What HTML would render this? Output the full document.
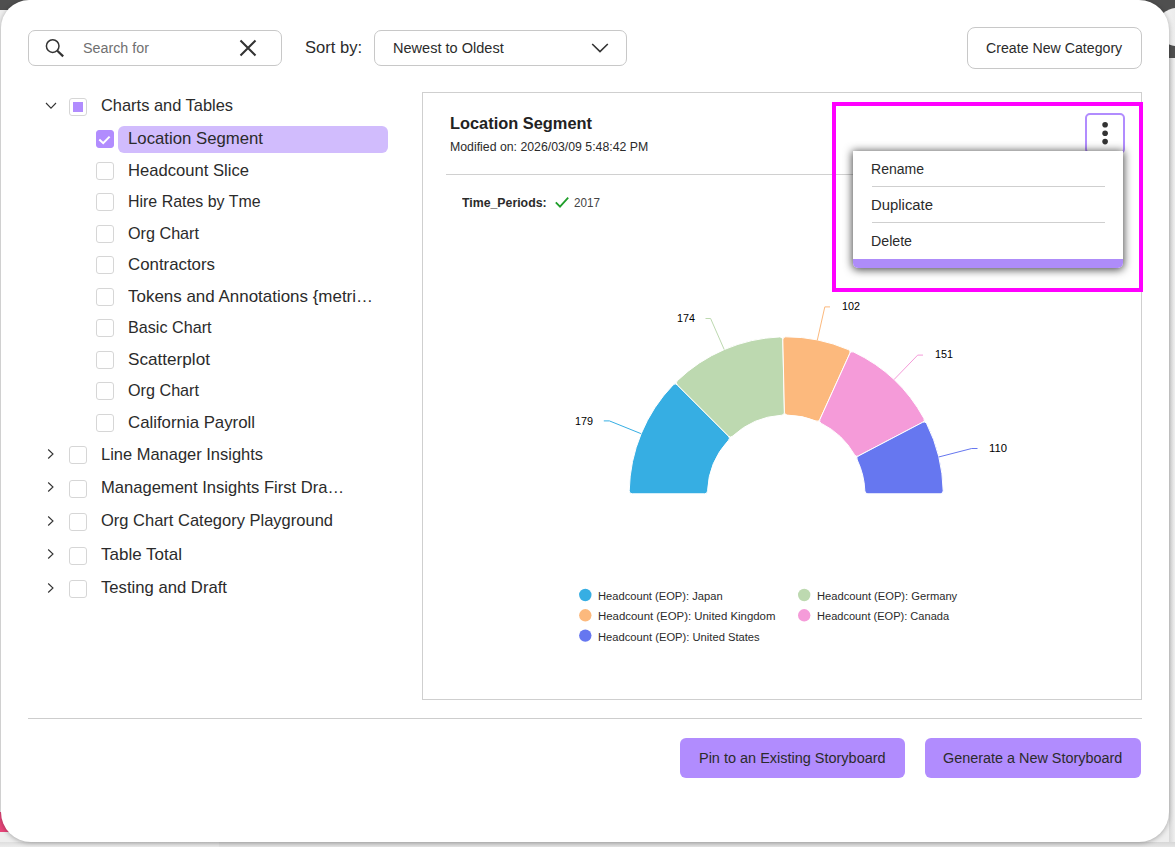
<!DOCTYPE html>
<html><head><meta charset="utf-8">
<style>
html,body{margin:0;padding:0;}
body{width:1175px;height:847px;overflow:hidden;position:relative;background:#eeeeee;font-family:"Liberation Sans",sans-serif;}
.abs{position:absolute;}
.t{position:absolute;white-space:nowrap;line-height:1;transform-origin:0 0;}
.cb{position:absolute;width:15.6px;height:16px;border:1px solid #d6d6d6;border-radius:3px;background:#fff;box-sizing:content-box}
.cb.on{background:#b18cfe;border-color:#b18cfe}
</style></head><body>
<div class="abs" style="left:0;top:0;width:1175px;height:9.5px;background:#4f4f4f"></div>
<div class="abs" style="left:1140px;top:0;width:35px;height:58px;background:#4f4f4f"></div>
<div class="abs" style="left:1157px;top:8px;width:40px;height:38px;border-radius:50%;background:linear-gradient(90deg,#f8f8f8,#dedede)"></div>
<div class="abs" style="left:1169px;top:58px;width:6px;height:784px;background:linear-gradient(90deg,#d8d8d8,#efefef)"></div>
<div class="abs" style="left:219px;top:842px;width:956px;height:5px;background:linear-gradient(180deg,#d6d6d6,#e6e6e6)"></div><div class="abs" style="left:0;top:842px;width:219px;height:5px;background:linear-gradient(180deg,#dedede,#ececec)"></div>
<div class="abs" style="left:0;top:812px;width:9px;height:19.5px;background:#e8467a"></div>
<div class="abs" style="left:0.7px;top:0;width:1168.5px;height:842px;background:#fff;border-radius:28px 30px 30px 30px;box-shadow:0 1px 5px rgba(0,0,0,0.3)"></div>
<!-- search -->
<div class="abs" style="left:28px;top:30px;width:252px;height:34px;border:1px solid #c8c8c8;border-radius:7px"></div>
<svg class="abs" style="left:44px;top:38px" width="22" height="22" viewBox="0 0 22 22"><circle cx="8.7" cy="8.1" r="6.3" fill="none" stroke="#333" stroke-width="1.5"/><path d="M13.3 12.7 L19.2 18.4" stroke="#333" stroke-width="2.2"/></svg>
<svg class="abs" style="left:238px;top:38px" width="20" height="20" viewBox="0 0 20 20"><path d="M2.5 2.5 L17.5 17.5 M17.5 2.5 L2.5 17.5" stroke="#333" stroke-width="2.1"/></svg>
<!-- sort -->
<div class="abs" style="left:374px;top:30px;width:250.5px;height:34px;border:1px solid #c8c8c8;border-radius:7px"></div>
<svg class="abs" style="left:590px;top:41px" width="20" height="14" viewBox="0 0 20 14"><path d="M2.2 3 L10 10.6 L17.8 3" fill="none" stroke="#333" stroke-width="1.6"/></svg>
<div class="abs" style="left:967px;top:27.3px;width:173px;height:40.2px;border:1px solid #c8c8c8;border-radius:8px"></div>
<!-- highlight -->
<div class="abs" style="left:118px;top:125.8px;width:270px;height:26.8px;background:#d1bcfd;border-radius:6px"></div>
<div class="cb" style="left:69.3px;top:98px"><div style="position:absolute;left:3px;top:3px;width:10.2px;height:10.2px;background:#b18cfe"></div></div><div class="cb on" style="left:96.2px;top:130.00px"><svg width="18" height="18" viewBox="0 0 18 18" style="position:absolute;left:-1px;top:-1px"><path d="M3.3 9.6 L7.2 13.2 L13.6 6.6" fill="none" stroke="#fff" stroke-width="2"/></svg></div><div class="cb" style="left:96.2px;top:161.56px"></div><div class="cb" style="left:96.2px;top:193.12px"></div><div class="cb" style="left:96.2px;top:224.68px"></div><div class="cb" style="left:96.2px;top:256.24px"></div><div class="cb" style="left:96.2px;top:287.80px"></div><div class="cb" style="left:96.2px;top:319.36px"></div><div class="cb" style="left:96.2px;top:350.92px"></div><div class="cb" style="left:96.2px;top:382.48px"></div><div class="cb" style="left:96.2px;top:414.04px"></div><div class="cb" style="left:69.3px;top:446.10px"></div><div class="cb" style="left:69.3px;top:479.60px"></div><div class="cb" style="left:69.3px;top:513.10px"></div><div class="cb" style="left:69.3px;top:546.60px"></div><div class="cb" style="left:69.3px;top:580.10px"></div>
<svg class="abs" style="left:44px;top:99.5px" width="14" height="12" viewBox="0 0 14 12"><path d="M2 3 L7 8.2 L12 3" fill="none" stroke="#333" stroke-width="1.1"/></svg><svg class="abs" style="left:45px;top:447.60px" width="12" height="12" viewBox="0 0 12 12"><path d="M3.2 1.5 L8 6 L3.2 10.5" fill="none" stroke="#333" stroke-width="1.1"/></svg><svg class="abs" style="left:45px;top:481.10px" width="12" height="12" viewBox="0 0 12 12"><path d="M3.2 1.5 L8 6 L3.2 10.5" fill="none" stroke="#333" stroke-width="1.1"/></svg><svg class="abs" style="left:45px;top:514.60px" width="12" height="12" viewBox="0 0 12 12"><path d="M3.2 1.5 L8 6 L3.2 10.5" fill="none" stroke="#333" stroke-width="1.1"/></svg><svg class="abs" style="left:45px;top:548.10px" width="12" height="12" viewBox="0 0 12 12"><path d="M3.2 1.5 L8 6 L3.2 10.5" fill="none" stroke="#333" stroke-width="1.1"/></svg><svg class="abs" style="left:45px;top:581.60px" width="12" height="12" viewBox="0 0 12 12"><path d="M3.2 1.5 L8 6 L3.2 10.5" fill="none" stroke="#333" stroke-width="1.1"/></svg>
<!-- panel -->
<div class="abs" style="left:422px;top:92px;width:718px;height:606px;border:1px solid #cfcfcf"></div>
<div class="abs" style="left:446px;top:174px;width:672px;height:1px;background:#d0d0d0"></div>
<svg class="abs" style="left:554px;top:195px" width="16" height="14" viewBox="0 0 16 14"><path d="M1.8 7.3 L6 11.6 L14.2 2.6" fill="none" stroke="#1f9e2a" stroke-width="1.8"/></svg>
<svg class="abs" style="left:0;top:0" width="1175" height="847" viewBox="0 0 1175 847"><path d="M632.20,493.80 Q629.20,493.80 629.23,490.80 A157.0,157.0 0 0 1 673.08,384.93 Q675.18,382.78 677.31,384.91 L728.43,436.03 Q730.55,438.15 728.47,440.31 A78.7,78.7 0 0 0 707.56,490.80 Q707.50,493.80 704.50,493.80 Z" fill="#36aee3" stroke="#fff" stroke-width="1" stroke-linejoin="round"/><path d="M677.31,384.91 Q675.18,382.78 677.33,380.68 A157.0,157.0 0 0 1 779.76,336.93 Q782.76,336.84 782.82,339.84 L784.41,412.12 Q784.47,415.12 781.48,415.24 A78.7,78.7 0 0 0 732.71,436.07 Q730.55,438.15 728.43,436.03 Z" fill="#bdd9b0" stroke="#fff" stroke-width="1" stroke-linejoin="round"/><path d="M782.82,339.84 Q782.76,336.84 785.76,336.80 A157.0,157.0 0 0 1 848.28,349.59 Q851.02,350.81 849.78,353.54 L819.93,419.39 Q818.69,422.12 815.94,420.93 A78.7,78.7 0 0 0 787.47,415.11 Q784.47,415.12 784.41,412.12 Z" fill="#fcb97d" stroke="#fff" stroke-width="1" stroke-linejoin="round"/><path d="M849.78,353.54 Q851.02,350.81 853.74,352.07 A157.0,157.0 0 0 1 923.85,418.29 Q925.27,420.93 922.61,422.32 L858.57,455.88 Q855.91,457.27 854.47,454.64 A78.7,78.7 0 0 0 821.40,423.41 Q818.69,422.12 819.93,419.39 Z" fill="#f59bd9" stroke="#fff" stroke-width="1" stroke-linejoin="round"/><path d="M922.61,422.32 Q925.27,420.93 926.63,423.60 A157.0,157.0 0 0 1 943.17,490.80 Q943.20,493.80 940.20,493.80 L867.90,493.80 Q864.90,493.80 864.84,490.80 A78.7,78.7 0 0 0 857.25,459.96 Q855.91,457.27 858.57,455.88 Z" fill="#6677f0" stroke="#fff" stroke-width="1" stroke-linejoin="round"/><path d="M603.8,420.9 L609.4,420.9 L640.9,433.6" fill="none" stroke="#36aee3" stroke-width="1"/><path d="M705.5,318.5 L710.6,318.5 L724.2,349.5" fill="none" stroke="#bdd9b0" stroke-width="1"/><path d="M830,306.9 L824.8,306.9 L817.3,340.2" fill="none" stroke="#fcb97d" stroke-width="1"/><path d="M923,355.1 L917.7,355.1 L894,379.6" fill="none" stroke="#f59bd9" stroke-width="1"/><path d="M977.5,448.5 L971.7,448.5 L938.7,457" fill="none" stroke="#6677f0" stroke-width="1"/><circle cx="585.3" cy="595.0" r="6.2" fill="#36aee3"/><circle cx="804.2" cy="595.0" r="6.2" fill="#bdd9b0"/><circle cx="585.3" cy="615.3" r="6.2" fill="#fcb97d"/><circle cx="804.2" cy="615.3" r="6.2" fill="#f59bd9"/><circle cx="585.3" cy="635.6" r="6.2" fill="#6677f0"/></svg>
<!-- kebab -->
<div class="abs" style="left:1085px;top:113px;width:36px;height:37px;border:2px solid #b18cfe;border-radius:5px;background:#fff"></div>
<svg class="abs" style="left:1095px;top:115px" width="20" height="34" viewBox="0 0 20 34"><circle cx="10.1" cy="9.7" r="2.8" fill="#333"/><circle cx="10.1" cy="18.3" r="2.8" fill="#333"/><circle cx="10.1" cy="26.6" r="2.8" fill="#333"/></svg>
<!-- menu -->
<div class="abs" style="left:852.7px;top:151px;width:270.5px;height:117px;background:#fff;border-radius:0 0 5px 5px;box-shadow:0 1px 8px 1px rgba(0,0,0,0.7);overflow:hidden">
<div class="abs" style="left:0;bottom:0;width:100%;height:9px;background:#ae8cf9"></div>
</div>
<div class="abs" style="left:871.5px;top:186px;width:233.5px;height:1px;background:#cfcfcf"></div>
<div class="abs" style="left:871.5px;top:222px;width:233.5px;height:1px;background:#cfcfcf"></div>
<div class="abs" style="left:832px;top:102px;width:303px;height:182px;border:4px solid #f0f"></div>
<!-- footer -->
<div class="abs" style="left:28px;top:718px;width:1114px;height:1px;background:#cdcdcd"></div>
<div class="abs" style="left:680px;top:738px;width:224.7px;height:39.6px;background:#b18cfe;border-radius:6px"></div>
<div class="abs" style="left:925px;top:738px;width:216px;height:39.6px;background:#b18cfe;border-radius:6px"></div>
<span class="t" id="t0" style="left:82.50px;top:41.13px;font-size:14.73px;font-weight:400;color:#707070;transform:scaleX(0.9719)">Search for</span><span class="t" id="t1" style="left:305.00px;top:39.68px;font-size:16.57px;font-weight:400;color:#2b2b2b;transform:scaleX(0.9986)">Sort by:</span><span class="t" id="t2" style="left:392.60px;top:41.03px;font-size:14.73px;font-weight:400;color:#2b2b2b;transform:scaleX(0.9877)">Newest to Oldest</span><span class="t" id="t3" style="left:986.00px;top:40.53px;font-size:14.73px;font-weight:400;color:#2b2b2b;transform:scaleX(0.9623)">Create New Category</span><span class="t" id="t4" style="left:100.60px;top:97.98px;font-size:16.57px;font-weight:400;color:#2b2b2b;transform:scaleX(0.9910)">Charts and Tables</span><span class="t" id="t5" style="left:127.60px;top:131.18px;font-size:16.57px;font-weight:400;color:#2b2b2b;transform:scaleX(1.0111)">Location Segment</span><span class="t" id="t6" style="left:127.60px;top:162.67px;font-size:16.57px;font-weight:400;color:#2b2b2b;transform:scaleX(1.0031)">Headcount Slice</span><span class="t" id="t7" style="left:127.60px;top:194.16px;font-size:16.57px;font-weight:400;color:#2b2b2b;transform:scaleX(0.9625)">Hire Rates by Tme</span><span class="t" id="t8" style="left:127.60px;top:225.65px;font-size:16.57px;font-weight:400;color:#2b2b2b;transform:scaleX(0.9764)">Org Chart</span><span class="t" id="t9" style="left:127.60px;top:257.14px;font-size:16.57px;font-weight:400;color:#2b2b2b;transform:scaleX(1.0162)">Contractors</span><span class="t" id="t10" style="left:127.60px;top:288.63px;font-size:16.57px;font-weight:400;color:#2b2b2b;transform:scaleX(1.0234)">Tokens and Annotations {metri…</span><span class="t" id="t11" style="left:127.60px;top:320.12px;font-size:16.57px;font-weight:400;color:#2b2b2b;transform:scaleX(0.9754)">Basic Chart</span><span class="t" id="t12" style="left:127.60px;top:351.61px;font-size:16.57px;font-weight:400;color:#2b2b2b;transform:scaleX(1.0355)">Scatterplot</span><span class="t" id="t13" style="left:127.60px;top:383.10px;font-size:16.57px;font-weight:400;color:#2b2b2b;transform:scaleX(0.9764)">Org Chart</span><span class="t" id="t14" style="left:127.60px;top:414.59px;font-size:16.57px;font-weight:400;color:#2b2b2b;transform:scaleX(1.0144)">California Payroll</span><span class="t" id="t15" style="left:100.60px;top:446.58px;font-size:16.57px;font-weight:400;color:#2b2b2b;transform:scaleX(0.9941)">Line Manager Insights</span><span class="t" id="t16" style="left:100.60px;top:480.03px;font-size:16.57px;font-weight:400;color:#2b2b2b;transform:scaleX(0.9999)">Management Insights First Dra…</span><span class="t" id="t17" style="left:100.60px;top:513.48px;font-size:16.57px;font-weight:400;color:#2b2b2b;transform:scaleX(0.9960)">Org Chart Category Playground</span><span class="t" id="t18" style="left:100.60px;top:546.93px;font-size:16.57px;font-weight:400;color:#2b2b2b;transform:scaleX(1.0267)">Table Total</span><span class="t" id="t19" style="left:100.60px;top:580.38px;font-size:16.57px;font-weight:400;color:#2b2b2b;transform:scaleX(1.0062)">Testing and Draft</span><span class="t" id="t20" style="left:450.40px;top:115.58px;font-size:16.57px;font-weight:700;color:#222;transform:scaleX(0.9891)">Location Segment</span><span class="t" id="t21" style="left:450.40px;top:141.57px;font-size:11.97px;font-weight:400;color:#2b2b2b;transform:scaleX(1.0271)">Modified on: 2026/03/09 5:48:42 PM</span><span class="t" id="t22" style="left:461.80px;top:197.57px;font-size:11.97px;font-weight:700;color:#2b2b2b;transform:scaleX(1.0284)">Time_Periods:</span><span class="t" id="t23" style="left:574.00px;top:197.57px;font-size:11.97px;font-weight:400;color:#444;transform:scaleX(0.9760)">2017</span><span class="t" id="t24" style="left:871.20px;top:163.11px;font-size:13.81px;font-weight:400;color:#2b2b2b;transform:scaleX(1.0162)">Rename</span><span class="t" id="t25" style="left:871.20px;top:199.11px;font-size:13.81px;font-weight:400;color:#2b2b2b;transform:scaleX(1.0777)">Duplicate</span><span class="t" id="t26" style="left:871.20px;top:234.91px;font-size:13.81px;font-weight:400;color:#2b2b2b;transform:scaleX(1.0278)">Delete</span><span class="t" id="t27" style="left:574.90px;top:415.18px;font-size:11.60px;font-weight:400;color:#000;transform:scaleX(0.9305)">179</span><span class="t" id="t28" style="left:676.50px;top:312.18px;font-size:11.60px;font-weight:400;color:#000;transform:scaleX(0.9305)">174</span><span class="t" id="t29" style="left:841.60px;top:300.08px;font-size:11.60px;font-weight:400;color:#000;transform:scaleX(0.9305)">102</span><span class="t" id="t30" style="left:934.50px;top:348.18px;font-size:11.60px;font-weight:400;color:#000;transform:scaleX(0.9305)">151</span><span class="t" id="t31" style="left:989.00px;top:442.38px;font-size:11.60px;font-weight:400;color:#000;transform:scaleX(0.9738)">110</span><span class="t" id="t32" style="left:597.80px;top:591.05px;font-size:11.05px;font-weight:400;color:#2b2b2b;transform:scaleX(1.0094)">Headcount (EOP): Japan</span><span class="t" id="t33" style="left:816.80px;top:591.05px;font-size:11.05px;font-weight:400;color:#2b2b2b;transform:scaleX(1.0103)">Headcount (EOP): Germany</span><span class="t" id="t34" style="left:597.80px;top:611.35px;font-size:11.05px;font-weight:400;color:#2b2b2b;transform:scaleX(1.0318)">Headcount (EOP): United Kingdom</span><span class="t" id="t35" style="left:816.80px;top:611.35px;font-size:11.05px;font-weight:400;color:#2b2b2b;transform:scaleX(1.0005)">Headcount (EOP): Canada</span><span class="t" id="t36" style="left:597.80px;top:631.75px;font-size:11.05px;font-weight:400;color:#2b2b2b;transform:scaleX(1.0128)">Headcount (EOP): United States</span><span class="t" id="t37" style="left:698.90px;top:751.91px;font-size:13.81px;font-weight:400;color:#2b2b2b;transform:scaleX(1.0487)">Pin to an Existing Storyboard</span><span class="t" id="t38" style="left:943.00px;top:751.91px;font-size:13.81px;font-weight:400;color:#2b2b2b;transform:scaleX(1.0431)">Generate a New Storyboard</span>
</body></html>
